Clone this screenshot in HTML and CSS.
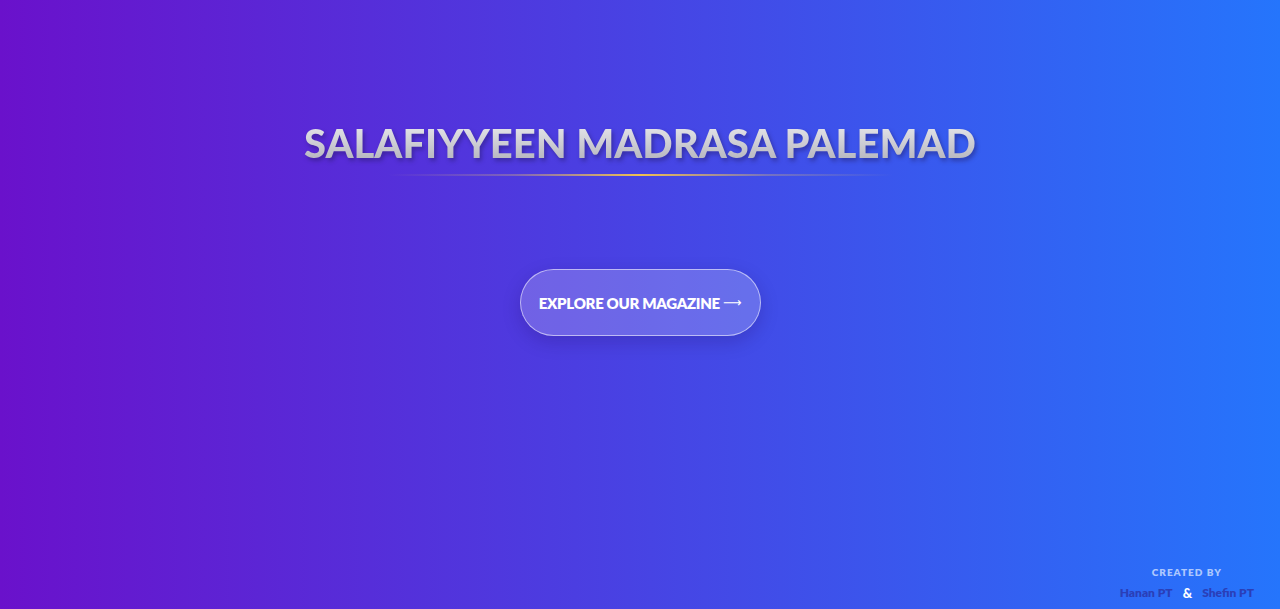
FILE: index.html
```html
<!DOCTYPE html>
<html lang="en">
<head>
<meta charset="utf-8">
<title>Salafiyyeen Madrasa Palemad</title>
<link rel="stylesheet" href="styles.css">
</head>
<body>
<div class="page">
  <main class="hero">
    <h1 class="title">SALAFIYYEEN MADRASA PALEMAD</h1>
    <div class="divider"></div>
    <a class="cta" href="#">EXPLORE OUR MAGAZINE <span class="arrow">⟶</span></a>
  </main>
  <footer class="credits">
    <div class="credits-label">CREATED BY</div>
    <div class="credits-names"><span class="name">Hanan PT</span><span class="amp">&amp;</span><span class="name">Shefin PT</span></div>
  </footer>
</div>
</body>
</html>
```
FILE: styles.css
```css
html, body {
  margin: 0;
  padding: 0;
  height: 100%;
}
body {
  font-family: "Lato", "Noto Sans", sans-serif;
  background: linear-gradient(90deg, #6a11cb 0%, #2575fc 100%);
  overflow: hidden;
}
.page {
  height: 100vh;
  display: flex;
  flex-direction: column;
}
.hero {
  flex: 1;
  display: flex;
  flex-direction: column;
  align-items: center;
  padding-top: 118px;
}
.title {
  margin: 0;
  font-size: 40px;
  font-weight: 900;
  line-height: 50px;
  color: #d2d2d8;
  background: linear-gradient(180deg, #eeeef2 0%, #cacad1 55%, #acacb5 100%);
  -webkit-background-clip: text;
  background-clip: text;
  -webkit-text-fill-color: transparent;
  filter: drop-shadow(2px 3px 2px rgba(30, 20, 80, 0.4));
}
.divider {
  width: 505px;
  height: 2px;
  margin-top: 6px;
  background: linear-gradient(90deg, rgba(240,200,100,0) 0%, rgba(240,200,100,0.3) 25%, #f0c050 50%, rgba(240,200,100,0.3) 75%, rgba(240,200,100,0) 100%);
}
.cta {
  margin-top: 93px;
  display: flex;
  align-items: center;
  justify-content: center;
  gap: 3px;
  box-sizing: border-box;
  width: 241px;
  height: 67px;
  border-radius: 34px;
  background: rgba(255, 255, 255, 0.2);
  border: 1px solid rgba(255, 255, 255, 0.55);
  box-shadow: 0 6px 18px rgba(30, 10, 90, 0.22);
  color: #ffffff;
  font-size: 15px;
  font-weight: 800;
  text-decoration: none;
  letter-spacing: -0.3px;
}
.arrow {
  font-family: "DejaVu Sans", sans-serif;
  font-weight: 400;
  font-size: 13px;
}
.credits {
  align-self: flex-end;
  padding: 0 26px 9px 0;
  text-align: center;
}
.credits-label {
  font-size: 10px;
  font-weight: 800;
  letter-spacing: 1px;
  color: rgba(210, 225, 255, 0.8);
  line-height: 14px;
}
.credits-names {
  margin-top: 7px;
  display: flex;
  align-items: center;
  line-height: 14px;
}
.name {
  font-size: 12px;
  font-weight: 800;
  color: #2a3fb8;
}
.amp {
  font-size: 13px;
  font-weight: 900;
  color: #ffffff;
  margin: 0 10px;
}
```
